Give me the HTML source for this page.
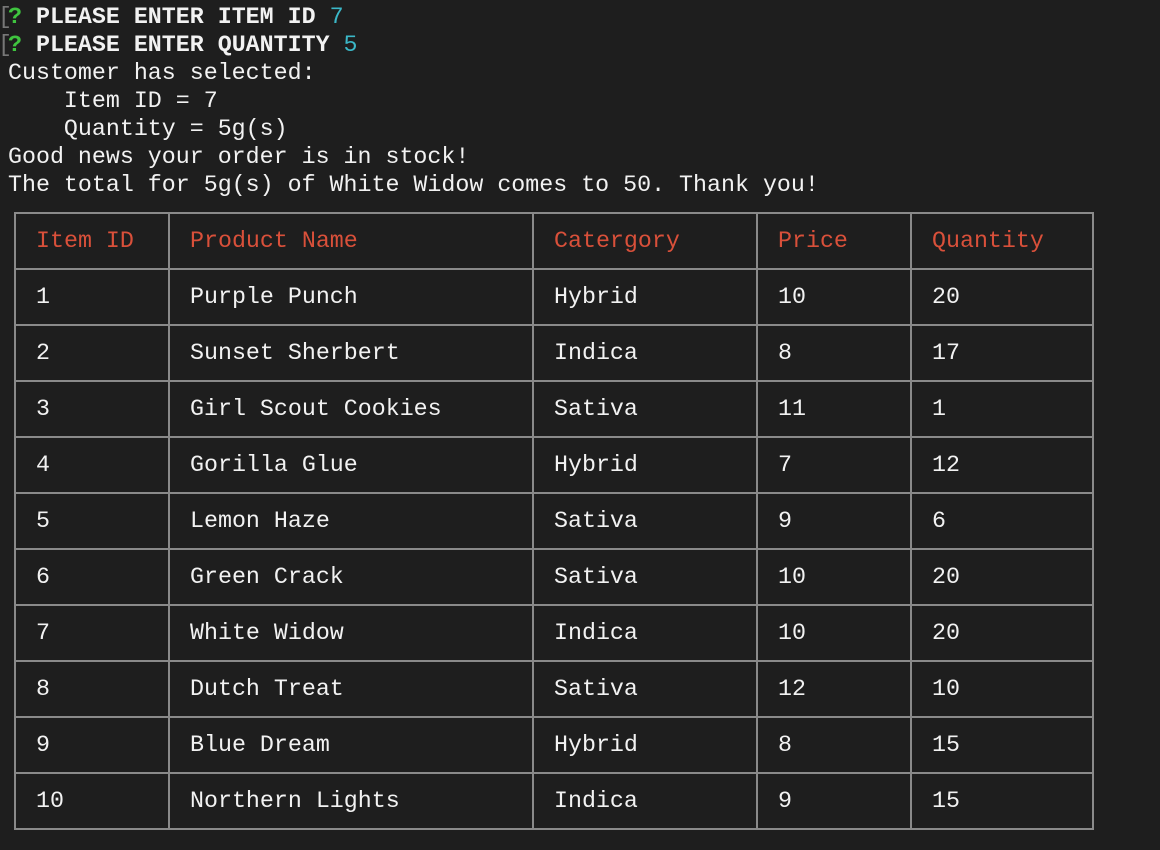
<!DOCTYPE html>
<html><head><meta charset="utf-8"><style>
html,body{margin:0;padding:0;background:#1e1e1e;width:1160px;height:850px;overflow:hidden}
body{font-family:"Liberation Mono",monospace;font-size:23.3px;color:#f2f2f2;position:relative}
.l{position:absolute;left:8px;white-space:pre;line-height:28px}
.b{font-weight:bold}
.g{color:#3fc43f}.c{color:#3bb8c8}
.br{position:absolute;left:-10px;color:#777}
.h{position:absolute;background:#8a8a8a;height:2px}
.v{position:absolute;background:#8a8a8a;width:2px}
.t{position:absolute;white-space:pre;line-height:56px}
.r{color:#d9503a}
</style></head><body>
<div class="l" style="top:3px"><span class="br">[</span><span class="g b">?</span> <span class="b">PLEASE ENTER ITEM ID</span> <span class="c">7</span></div>
<div class="l" style="top:31px"><span class="br">[</span><span class="g b">?</span> <span class="b">PLEASE ENTER QUANTITY</span> <span class="c">5</span></div>
<div class="l" style="top:59px">Customer has selected:</div>
<div class="l" style="top:87px">    Item ID = 7</div>
<div class="l" style="top:115px">    Quantity = 5g(s)</div>
<div class="l" style="top:143px">Good news your order is in stock!</div>
<div class="l" style="top:171px">The total for 5g(s) of White Widow comes to 50. Thank you!</div>
<div id="tb"></div>
<script>
var cols=[15,169,533,757,911,1093];
var rows=[];for(var i=0;i<=11;i++)rows.push(213+i*56);
var data=[["Item ID","Product Name","Catergory","Price","Quantity"],
["1","Purple Punch","Hybrid","10","20"],["2","Sunset Sherbert","Indica","8","17"],
["3","Girl Scout Cookies","Sativa","11","1"],["4","Gorilla Glue","Hybrid","7","12"],
["5","Lemon Haze","Sativa","9","6"],["6","Green Crack","Sativa","10","20"],
["7","White Widow","Indica","10","20"],["8","Dutch Treat","Sativa","12","10"],
["9","Blue Dream","Hybrid","8","15"],["10","Northern Lights","Indica","9","15"]];
var h="";
rows.forEach(function(y){h+='<div class="h" style="left:14px;width:1080px;top:'+(y-1)+'px"></div>';});
cols.forEach(function(x){h+='<div class="v" style="top:212px;height:618px;left:'+(x-1)+'px"></div>';});
data.forEach(function(r,i){r.forEach(function(t,j){
h+='<div class="t'+(i==0?' r':'')+'" style="left:'+(cols[j]+21)+'px;top:'+(rows[i])+'px">'+t+'</div>';});});
document.getElementById("tb").innerHTML=h;
</script>
</body></html>
